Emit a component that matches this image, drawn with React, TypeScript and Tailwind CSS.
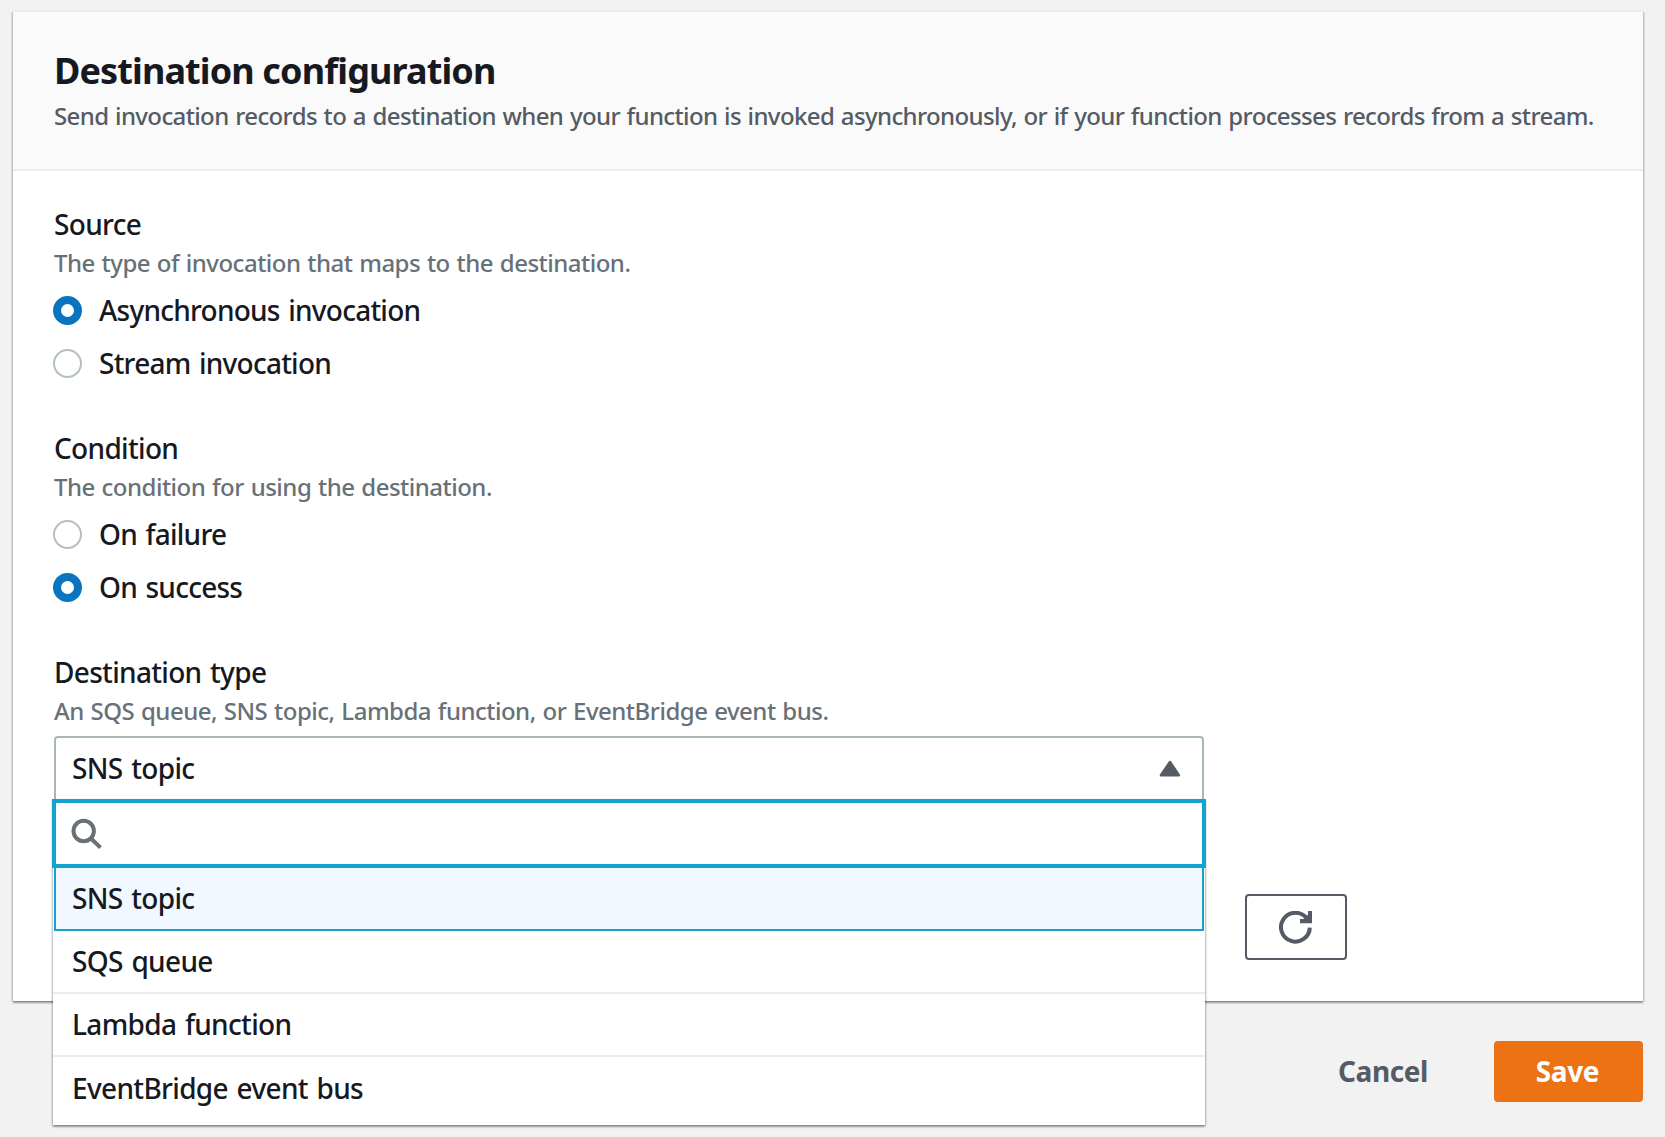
import type { ReactNode } from 'react';

function Radio({ label, checked }: { label: string; checked?: boolean }) {
  return (
    <label className="-ml-px flex h-9 items-center gap-[17px]">
      <span
        className={
          checked
            ? 'size-[29px] shrink-0 rounded-full border-[8px] border-[#0a74bf] bg-white'
            : 'size-[29px] shrink-0 rounded-full border-2 border-[#b4c0c1] bg-white'
        }
      />
      <span className="-mt-px text-[28px] leading-9 font-medium tracking-[-0.76px] [word-spacing:2px]">{label}</span>
    </label>
  );
}

function Field({ label, hint, children }: { label: string; hint: string; children: ReactNode }) {
  return (
    <section>
      <h2 className="-mt-px text-[28px] leading-9 font-medium tracking-[-0.68px] [word-spacing:2px]">{label}</h2>
      <p className="mt-1.5 text-[24px] leading-[30px] font-medium tracking-[-0.5px] text-[#687078] [word-spacing:1px]">
        {hint}
      </p>
      {children}
    </section>
  );
}

function SearchIcon() {
  return (
    <svg width="31" height="31" viewBox="0 0 31 31" fill="none" stroke="#687078" strokeWidth="4">
      <circle cx="12.7" cy="13" r="10.2" />
      <path d="M20 20.5L29.5 29.6" />
    </svg>
  );
}

function RefreshIcon() {
  return (
    <svg width="33" height="33" viewBox="0 0 33 33" className="-ml-px">
      <path d="M30.8 16.6A14.4 14.4 0 1 1 27.5 7" fill="none" stroke="#545b64" strokeWidth="4" />
      <path d="M33 0H29V3.8L24.5 8H21V12.2H33Z" fill="#545b64" />
    </svg>
  );
}

function Caret() {
  return (
    <svg width="22" height="17" viewBox="0 0 22 17" className="mt-px">
      <path d="M11 2L19.8 15.2H2Z" fill="#545b64" stroke="#545b64" strokeWidth="2.6" strokeLinejoin="round" />
    </svg>
  );
}

const options = ['SQS queue', 'Lambda function', 'EventBridge event bus'];

export default function App() {
  return (
    <main className="h-[1137px] w-[1665px] overflow-hidden bg-[#f2f2f2] px-[13px] pt-[11px] font-['Noto_Sans',sans-serif] text-[#16191f]">
      <div className="h-[990px] w-[1630px] bg-white shadow-[0_2px_2px_0_rgba(0,28,36,0.3),1px_1px_2px_0_rgba(0,28,36,0.2),-1px_1px_2px_0_rgba(0,28,36,0.2)]">
        <header className="h-[160px] border-t border-b-2 border-[#eaeded] bg-[#fafafa] px-[41px] pt-[37px]">
          <h1 className="text-[36px] leading-[44px] font-bold tracking-[-0.88px]">Destination configuration</h1>
          <p className="mt-2 text-[24px] leading-[30px] font-medium tracking-[-0.62px] whitespace-nowrap text-[#545b64] [word-spacing:1px]">
            Send invocation records to a destination when your function is invoked asynchronously, or if your function
            processes records from a stream.
          </p>
        </header>

        <div className="flex flex-col gap-[50px] px-[41px] pt-9">
          <Field label="Source" hint="The type of invocation that maps to the destination.">
            <div className="mt-[14px] flex flex-col gap-[17px]">
              <Radio label="Asynchronous invocation" checked />
              <Radio label="Stream invocation" />
            </div>
          </Field>
          <Field label="Condition" hint="The condition for using the destination.">
            <div className="mt-[14px] flex flex-col gap-[17px]">
              <Radio label="On failure" />
              <Radio label="On success" checked />
            </div>
          </Field>
          <Field label="Destination type" hint="An SQS queue, SNS topic, Lambda function, or EventBridge event bus.">
            <div className="mt-[10px] flex items-start gap-[41px]">
              <div className="relative w-[1150px] text-[28px] leading-9 font-medium tracking-[-0.66px] [word-spacing:2px]">
                <div className="flex h-[65px] items-center justify-between rounded-t-[4px] border-2 border-[#aab7b8] bg-white pr-[21px] pb-0.5 pl-4">
                  <span>SNS topic</span>
                  <Caret />
                </div>
                <div className="absolute top-[63px] -left-px w-[1152px] bg-white shadow-[0_2px_2px_0_rgba(0,28,36,0.3),1px_1px_2px_0_rgba(0,28,36,0.2),-1px_1px_2px_0_rgba(0,28,36,0.2)]">
                  <div className="-mx-px flex h-[69px] items-center border-4 border-[#14a3cf] bg-white pl-[15px]">
                    <SearchIcon />
                  </div>
                  <div className="mx-px flex h-[63px] items-center border-2 border-t-0 border-[#14a3cf] bg-[#f1f8ff] pb-0.5 pl-4">
                    SNS topic
                  </div>
                  <ul className="divide-y-2 divide-[#eaeded] pb-[5px]">
                    {options.map((o) => (
                      <li key={o} className="flex h-[63px] items-center pb-0.5 pl-[19px]">
                        {o}
                      </li>
                    ))}
                  </ul>
                </div>
              </div>
              <button className="mt-[158px] flex h-[66px] w-[102px] items-center justify-center rounded-[4px] border-2 border-[#545b64] bg-white">
                <RefreshIcon />
              </button>
            </div>
          </Field>
        </div>
      </div>

      <div className="mt-10 flex w-[1630px] items-center justify-end gap-[66px] text-[28px] leading-9 font-bold tracking-[-0.4px]">
        <button className="pb-0.5 text-[#545b64]">Cancel</button>
        <button className="h-[61px] w-[149px] rounded-[4px] bg-[#ec7214] pr-0.5 pb-0.5 text-white">Save</button>
      </div>
    </main>
  );
}
